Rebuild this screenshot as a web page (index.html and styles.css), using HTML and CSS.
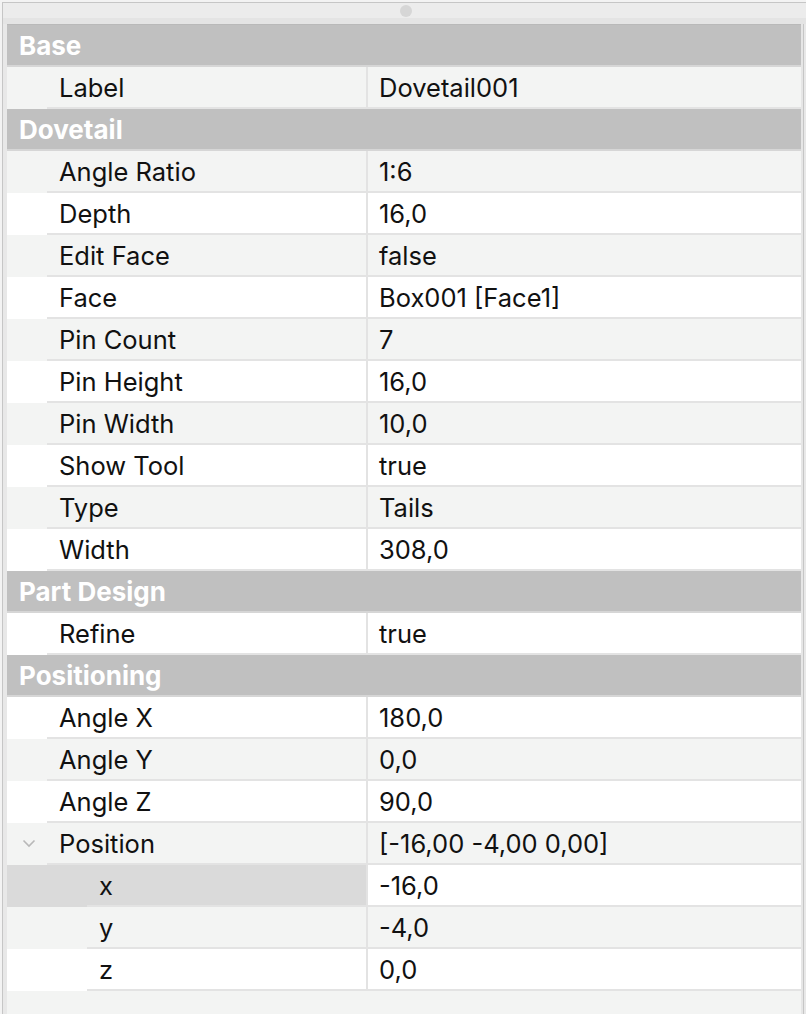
FILE: index.html
```html
<!DOCTYPE html>
<html>
<head>
<meta charset="utf-8">
<link rel="stylesheet" href="styles.css">
</head>
<body>
<div class="frame">
  <div class="handle-bar"><span class="handle"></span></div>
  <div class="band"></div>
  <div class="content">
    <div class="tree">
      <div class="group">Base</div>
      <div class="row alt"><div class="name"><span class="lbl">Label</span></div><div class="val">Dovetail001</div></div>
      <div class="group">Dovetail</div>
      <div class="row alt"><div class="name"><span class="lbl">Angle Ratio</span></div><div class="val">1:6</div></div>
      <div class="row"><div class="name"><span class="lbl">Depth</span></div><div class="val">16,0</div></div>
      <div class="row alt"><div class="name"><span class="lbl">Edit Face</span></div><div class="val">false</div></div>
      <div class="row"><div class="name"><span class="lbl">Face</span></div><div class="val">Box001 [Face1]</div></div>
      <div class="row alt"><div class="name"><span class="lbl">Pin Count</span></div><div class="val">7</div></div>
      <div class="row"><div class="name"><span class="lbl">Pin Height</span></div><div class="val">16,0</div></div>
      <div class="row alt"><div class="name"><span class="lbl">Pin Width</span></div><div class="val">10,0</div></div>
      <div class="row"><div class="name"><span class="lbl">Show Tool</span></div><div class="val">true</div></div>
      <div class="row alt"><div class="name"><span class="lbl">Type</span></div><div class="val">Tails</div></div>
      <div class="row"><div class="name"><span class="lbl">Width</span></div><div class="val">308,0</div></div>
      <div class="group">Part Design</div>
      <div class="row"><div class="name"><span class="lbl">Refine</span></div><div class="val">true</div></div>
      <div class="group">Positioning</div>
      <div class="row"><div class="name"><span class="lbl">Angle X</span></div><div class="val">180,0</div></div>
      <div class="row alt"><div class="name"><span class="lbl">Angle Y</span></div><div class="val">0,0</div></div>
      <div class="row"><div class="name"><span class="lbl">Angle Z</span></div><div class="val">90,0</div></div>
      <div class="row alt"><div class="name"><span class="chev"><svg width="14" height="9" viewBox="0 0 14 9"><polyline points="1.5,1.5 7,7 12.5,1.5" fill="none" stroke="#b8b8b8" stroke-width="1.6"/></svg></span><span class="lbl">Position</span></div><div class="val">[-16,00 -4,00 0,00]</div></div>
      <div class="row child selected"><div class="name"><span class="lbl">x</span></div><div class="val">-16,0</div></div>
      <div class="row child alt"><div class="name"><span class="lbl">y</span></div><div class="val">-4,0</div></div>
      <div class="row child"><div class="name"><span class="lbl">z</span></div><div class="val">0,0</div></div>
      <div class="filler"></div>
    </div>
    <div class="edge"></div>
  </div>
</div>
</body>
</html>
```
FILE: styles.css
```css
html, body {
  margin: 0;
  padding: 0;
}
body {
  width: 806px;
  height: 1014px;
  overflow: hidden;
  background: #f3f3f3;
  font-family: Inter, "Liberation Sans", sans-serif;
  font-size: 25.5px;
  color: #111;
}
.frame {
  margin: 2px 0 0 2px;
  border-top: 1px solid #c6c6c6;
  border-left: 1px solid #c6c6c6;
  height: 1011px;
  background: #ececec;
  display: flex;
  flex-direction: column;
}
.handle-bar {
  height: 15px;
  display: flex;
  justify-content: center;
  align-items: center;
}
.handle {
  width: 12px;
  height: 12px;
  border-radius: 50%;
  background: #d6d6d6;
  margin-left: 2px;
}
.band {
  height: 6px;
  background: #e4e4e4;
}
.content {
  flex: 1;
  display: flex;
  padding-left: 4px;
  background: #e8e8e8;
  min-height: 0;
}
.tree {
  width: 794px;
  border-top: 1px solid #b9b9b9;
  display: flex;
  flex-direction: column;
  background: #fff;
}
.edge {
  width: 2px;
  background: #e6e6e6;
  border-right: 1px solid #c6c6c6;
}
.group {
  height: 38px;
  padding-top: 2px;
  border-bottom: 2px solid #d6d6d6;
  background: #c0c0c0;
  color: #fff;
  font-weight: 700;
  font-size: 26px;
  line-height: 38px;
  padding-left: 12px;
}
.row {
  height: 42px;
  display: grid;
  grid-template-columns: 359px 1fr;
  background: #fff;
}
.row.alt {
  background: #f3f4f3;
}
.name {
  position: relative;
  padding-left: 40px;
  display: flex;
}
.row.child .name {
  padding-left: 80px;
}
.row.selected .name {
  background: #dadada;
}
.lbl {
  flex: 1;
  border-bottom: 2px solid #e3e3e3;
  line-height: 38px;
  padding-top: 2px;
  padding-left: 12px;
}
.chev {
  position: absolute;
  left: 15px;
  top: 16px;
  width: 14px;
  height: 9px;
  display: block;
}
.chev svg {
  display: block;
}
.val {
  border-left: 2px solid #e3e3e3;
  border-bottom: 2px solid #e3e3e3;
  line-height: 38px;
  padding-top: 2px;
  padding-left: 11px;
}
.filler {
  flex: 1;
  background: #f3f4f3;
}
```
